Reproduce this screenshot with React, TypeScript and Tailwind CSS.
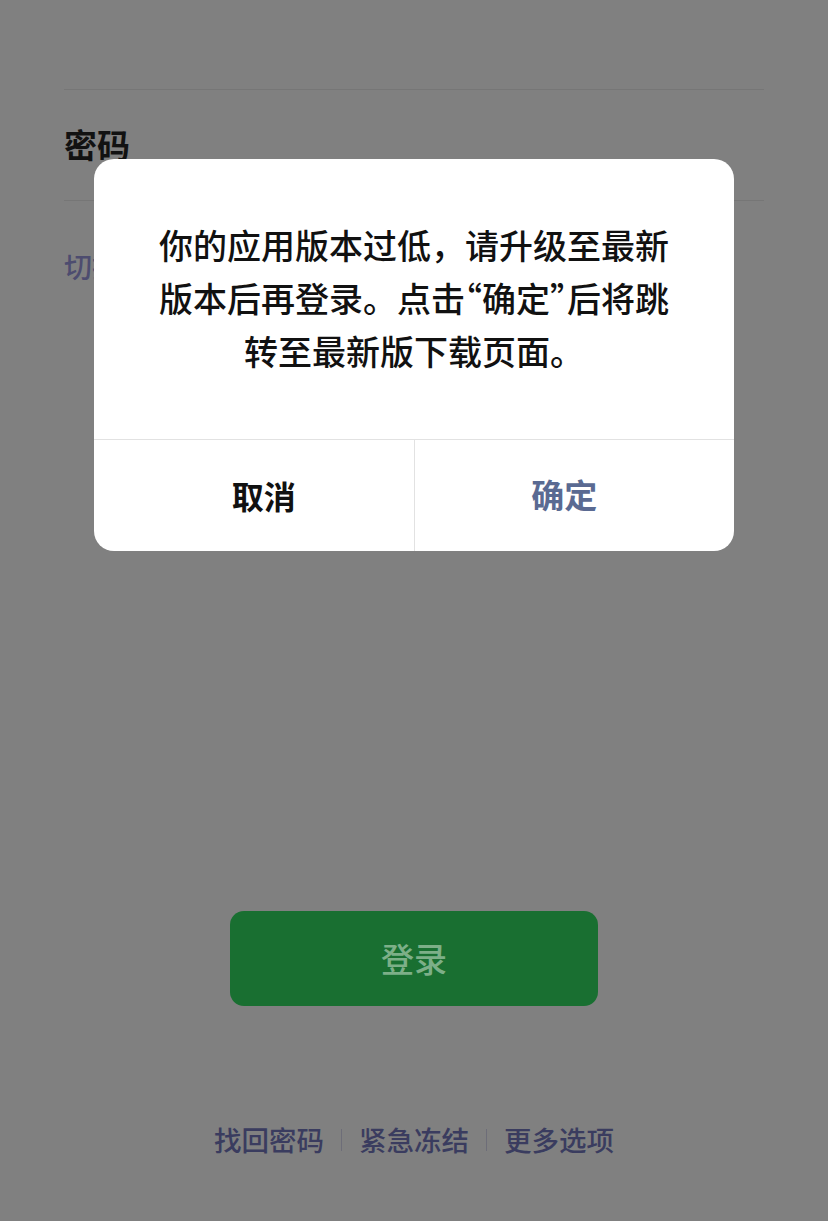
import React from 'react';

const font = { fontFamily: '"Noto Sans CJK SC", "Noto Sans", sans-serif' };

const LoginDialog: React.FC = () => (
  <div className="absolute inset-0 flex justify-center pt-[159px]">
    <div className="w-[640px] h-[392px] bg-white rounded-[20px] overflow-hidden flex flex-col">
      <div className="flex-1 flex flex-col items-center justify-center pb-[4px] text-[34px] leading-[53px] font-medium text-[#111] text-center">
        <p>你的应用版本过低，请升级至最新</p>
        <p>
          版本后再登录。点击
          <span className="[font-feature-settings:'halt']">“确定”</span>
          后将跳
        </p>
        <p>转至最新版下载页面。</p>
      </div>
      <div className="h-[112px] flex border-t border-[#e2e2e2]">
        <button className="flex-1 pl-[20px] pb-[2px] text-[32px] font-bold text-[#111]">取消</button>
        <div className="w-px bg-[#e2e2e2]" />
        <button className="flex-1 pr-[20px] pb-[2px] text-[33px] font-bold text-[#5a6a92]">确定</button>
      </div>
    </div>
  </div>
);

const App: React.FC = () => {
  return (
    <div className="relative w-[828px] h-[1221px] overflow-hidden bg-[#808080]" style={font}>
      <div className="px-[64px] pt-[89px]">
        <div className="h-px bg-[#767676]" />
        <div className="h-[110px] flex items-center">
          <span className="text-[33px] font-bold text-[#121212]">密码</span>
        </div>
        <div className="h-px bg-[#767676]" />
        <div className="mt-[46px] text-[28px] leading-[38px] font-medium text-[#4d4c6f]">
          切换到短信验证码登录
        </div>
      </div>

      <div className="flex justify-center mt-[626px]">
        <button className="w-[368px] h-[95px] rounded-[14px] bg-[#196f31] text-[33px] font-medium text-[#7daf88]">
          登录
        </button>
      </div>

      <div className="flex justify-center items-center mt-[113px] text-[27.5px] font-medium text-[#3a3c5f]">
        <span>找回密码</span>
        <span className="mx-[17px] w-px h-[22px] bg-[#6d6d78]" />
        <span>紧急冻结</span>
        <span className="mx-[17px] w-px h-[22px] bg-[#6d6d78]" />
        <span>更多选项</span>
      </div>

      <LoginDialog />
    </div>
  );
};

export default App;
